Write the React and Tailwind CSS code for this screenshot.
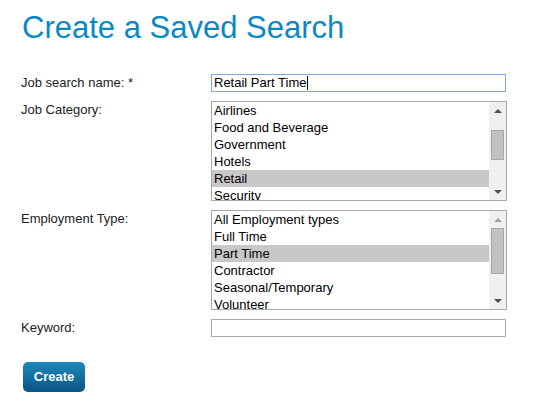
import React from "react";

const font = { fontFamily: '"Liberation Sans", Arial, sans-serif' };

const categories = ["Airlines", "Food and Beverage", "Government", "Hotels", "Retail", "Security"];
const employmentTypes = [
  "All Employment types",
  "Full Time",
  "Part Time",
  "Contractor",
  "Seasonal/Temporary",
  "Volunteer",
];

function Arrow({ up, light }) {
  const color = light ? "border-[#a3a3a3]" : "border-[#505050]";
  return (
    <div className="flex h-[17px] items-center justify-center">
      <div
        className={
          up
            ? `h-0 w-0 border-x-[4px] border-b-[4px] border-x-transparent ${color}`
            : `h-0 w-0 border-x-[4px] border-t-[4px] border-x-transparent ${color}`
        }
      />
    </div>
  );
}

function ListBox({ items, selected, thumbTop, thumbHeight, upLight }) {
  return (
    <div className="flex h-[100px] w-[296px] border border-[#a9a9a9] bg-white">
      <div className="flex-1 overflow-hidden">
        {items.map((item) => (
          <div
            key={item}
            className={
              item === selected
                ? "h-[17px] bg-[#c8c8c8] pl-[2px] text-[13px] leading-[17px] text-black"
                : "h-[17px] pl-[2px] text-[13px] leading-[17px] text-black"
            }
          >
            {item}
          </div>
        ))}
      </div>
      {/* fake scrollbar */}
      <div className="relative w-[17px] bg-[#f0f0f0]">
        <Arrow up light={upLight} />
        <div
          className="absolute left-[2px] w-[13px] border border-[#a8a8a8] bg-[#c1c1c1]"
          style={{ top: thumbTop, height: thumbHeight }}
        />
        <div className="absolute bottom-0 left-0 right-0">
          <Arrow />
        </div>
      </div>
    </div>
  );
}

function Row({ label, children, top }) {
  return (
    <div className="mb-[9px] flex">
      <div
        className={
          top
            ? "w-[190px] text-[13px] leading-[17px] text-[#222]"
            : "h-[18px] w-[190px] text-[13px] leading-[18px] text-[#222]"
        }
      >
        {label}
      </div>
      {children}
    </div>
  );
}

export default function App() {
  return (
    <div className="min-h-[419px] bg-white pl-[21px] pt-[10px]" style={font}>
      <h1 className="pl-[1px] text-[31px] leading-[36px] text-[#0a87c4]">Create a Saved Search</h1>

      <div className="mt-[28px]">
        <Row label="Job search name: *">
          <div className="flex h-[18px] w-[295px] items-center border border-[#7aa7dc] bg-white pl-[2px] text-[13px] leading-[16px] text-black">
            <span>Retail Part Time</span>
            <span className="ml-[1px] h-[14px] w-[1px] bg-black" />
          </div>
        </Row>

        <Row label="Job Category:" top>
          <ListBox items={categories} selected="Retail" thumbTop={28} thumbHeight={30} />
        </Row>

        <Row label="Employment Type:" top>
          <ListBox
            items={employmentTypes}
            selected="Part Time"
            thumbTop={17}
            thumbHeight={46}
            upLight
          />
        </Row>

        <Row label="Keyword:">
          <div className="h-[18px] w-[295px] border border-[#a9a9a9] bg-white" />
        </Row>
      </div>

      <button className="mt-[16px] ml-[2px] h-[30px] w-[62px] rounded-[5px] bg-gradient-to-b from-[#1e88ba] to-[#0a5684] text-[13px] font-bold text-white">
        Create
      </button>
    </div>
  );
}
